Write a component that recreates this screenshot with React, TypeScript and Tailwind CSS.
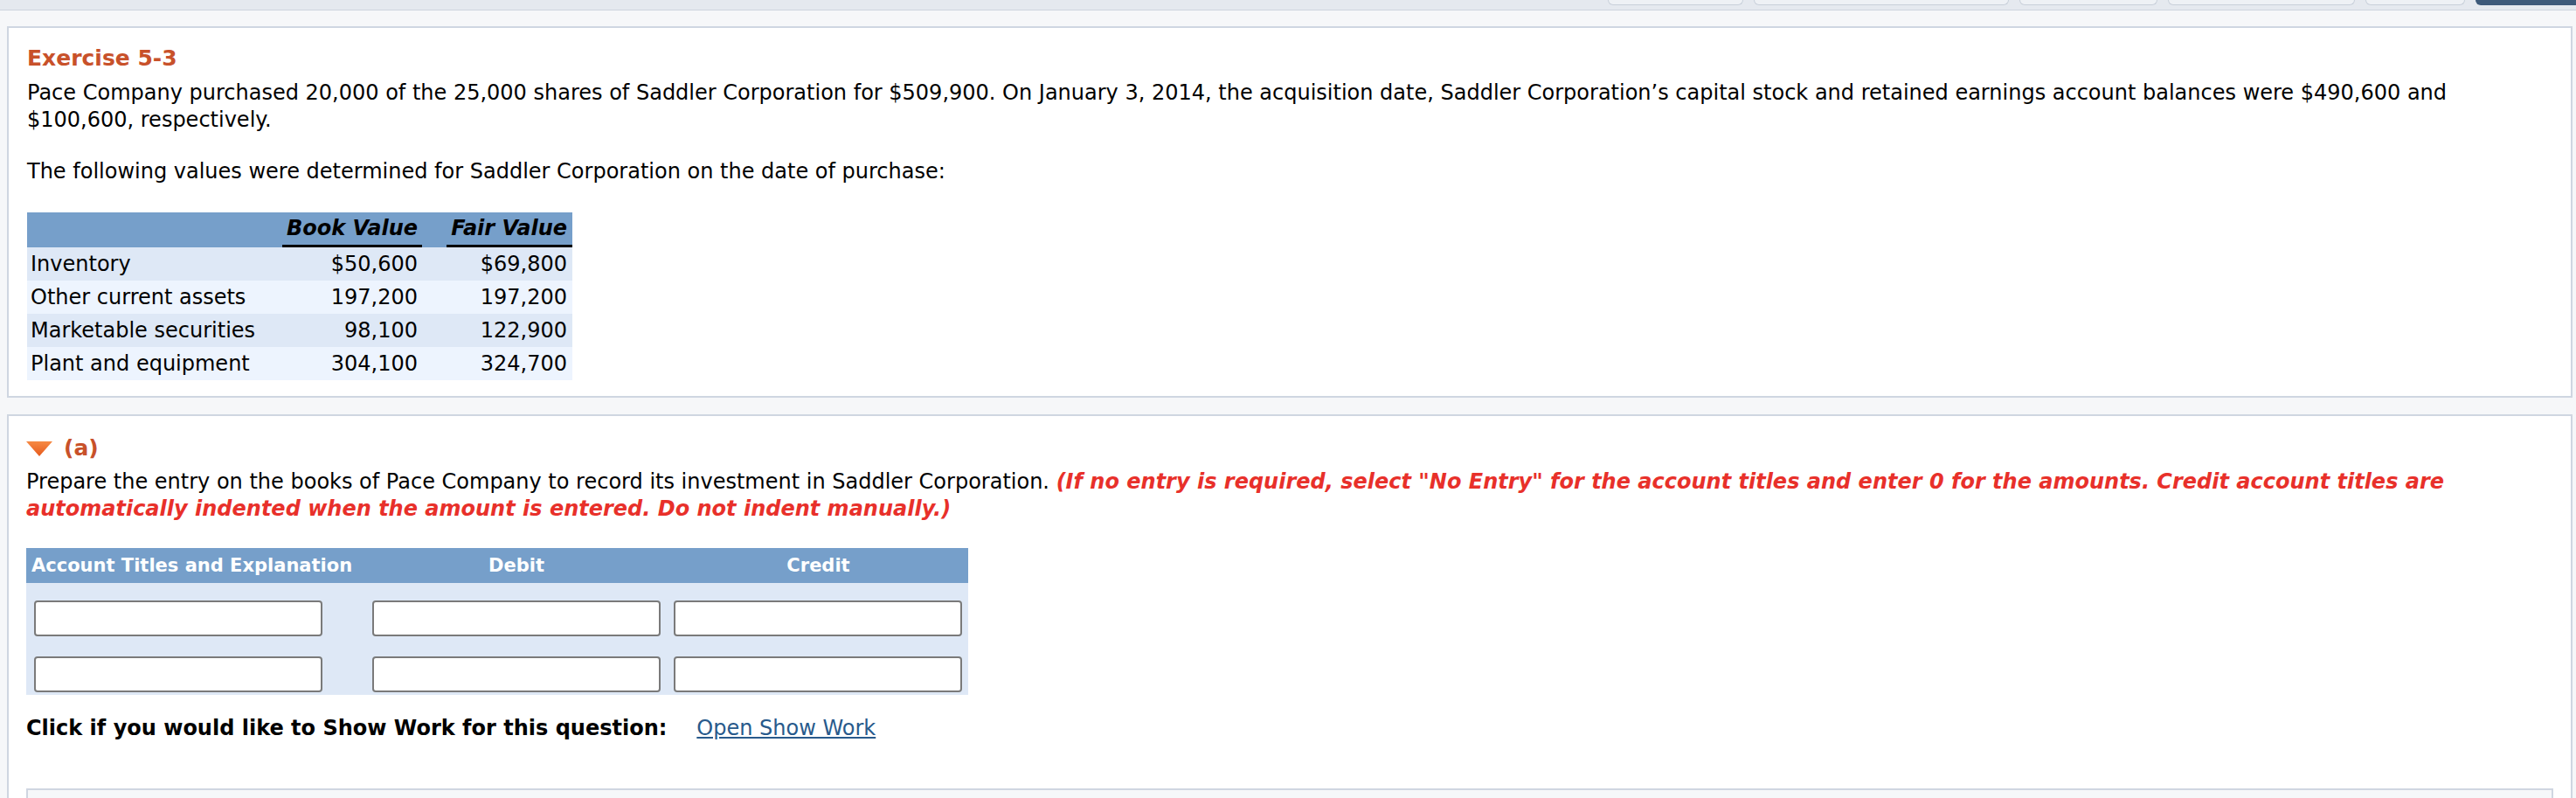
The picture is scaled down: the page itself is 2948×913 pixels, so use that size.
import React from 'react';

const font = { fontFamily: '"DejaVu Sans", Verdana, sans-serif' };

const assets = [
  { label: 'Inventory', book: '$50,600', fair: '$69,800' },
  { label: 'Other current assets', book: '197,200', fair: '197,200' },
  { label: 'Marketable securities', book: '98,100', fair: '122,900' },
  { label: 'Plant and equipment', book: '304,100', fair: '324,700' },
];

// top strip, only the lower edge of the toolbar buttons shows
const TopBar = () => (
  <div className="h-[12px] bg-[#e5e9ef] border-b border-[#cdd4de] flex justify-end items-start gap-[12px] overflow-hidden">
    <div className="w-[155px] h-[6px] bg-[#eef1f5] border border-t-0 border-[#c9d0da] rounded-b-[6px]" />
    <div className="w-[292px] h-[6px] bg-[#eef1f5] border border-t-0 border-[#c9d0da] rounded-b-[6px]" />
    <div className="w-[158px] h-[6px] bg-[#eef1f5] border border-t-0 border-[#c9d0da] rounded-b-[6px]" />
    <div className="w-[214px] h-[6px] bg-[#eef1f5] border border-t-0 border-[#c9d0da] rounded-b-[6px]" />
    <div className="w-[114px] h-[6px] bg-[#eef1f5] border border-t-0 border-[#c9d0da] rounded-b-[6px]" />
    <div className="w-[115px] h-[6px] bg-[#3e5a7a] rounded-bl-[6px]" />
  </div>
);

const ValuesTable = () => (
  <div className="w-[624px] text-[24px] text-black">
    <div className="flex h-[40px] bg-[#769fca]">
      <div className="w-[292px]" />
      <div className="w-[160px] h-[40px] border-b-[3px] border-black text-right pr-[5px] leading-[37px] font-bold italic whitespace-nowrap">Book Value</div>
      <div className="w-[28px]" />
      <div className="w-[144px] h-[40px] border-b-[3px] border-black text-right pr-[6px] leading-[37px] font-bold italic whitespace-nowrap">Fair Value</div>
    </div>
    {assets.map((row, i) => (
      <div key={row.label} className={`flex h-[38px] leading-[38px] ${i % 2 === 0 ? 'bg-[#dee8f6]' : 'bg-[#edf4fe]'}`}>
        <div className="w-[292px] pl-[4px] whitespace-nowrap">{row.label}</div>
        <div className="w-[160px] text-right pr-[5px]">{row.book}</div>
        <div className="w-[28px]" />
        <div className="w-[144px] text-right pr-[6px]">{row.fair}</div>
      </div>
    ))}
  </div>
);

const EntryInput = () => (
  <input
    type="text"
    className="ml-[9px] w-[330px] h-[41px] bg-white border-2 border-[#7a7a7a] rounded-[4px] outline-none"
  />
);

const JournalTable = () => (
  <div className="w-[1078px]">
    <div className="grid grid-cols-[387px_348px_343px] h-[40px] bg-[#769fca] text-white font-bold text-[21px] leading-[40px]">
      <div className="pl-[6px] whitespace-nowrap">Account Titles and Explanation</div>
      <div className="text-center">Debit</div>
      <div className="text-center">Credit</div>
    </div>
    <div className="bg-[#dee8f6] pt-[20px] pb-[3px] flex flex-col gap-[23px]">
      {[0, 1].map((r) => (
        <div key={r} className="grid grid-cols-[387px_348px_343px]">
          <div><EntryInput /></div>
          <div><EntryInput /></div>
          <div className="-ml-[3px]"><EntryInput /></div>
        </div>
      ))}
    </div>
  </div>
);

export default function App() {
  return (
    <div className="min-h-screen bg-[#f6f7f9] text-black" style={font}>
      <TopBar />
      <div className="pl-[8px] pr-[4px] pt-[18px] flex flex-col gap-[19px]">
        {/* problem statement */}
        <div className="bg-white border-2 border-[#cfd6e1] pl-[21px] pr-[20px] pt-[19px] pb-[18px]">
          <h2 className="text-[25px] leading-[32px] font-bold text-[#c8512a]">Exercise 5-3</h2>
          <p className="mt-[8px] text-[24px] leading-[31px]">
            Pace Company purchased 20,000 of the 25,000 shares of Saddler Corporation for $509,900. On January 3, 2014, the acquisition date, Saddler Corporation’s capital stock and retained earnings account balances were $490,600 and $100,600, respectively.
          </p>
          <p className="mt-[28px] text-[24px] leading-[31px]">
            The following values were determined for Saddler Corporation on the date of purchase:
          </p>
          <div className="mt-[31px]">
            <ValuesTable />
          </div>
        </div>

        {/* part (a) */}
        <div className="bg-white border-2 border-[#cfd6e1] pl-[20px] pr-[20px] pt-[21px]">
          <div className="flex items-center gap-[13px] h-[32px]">
            <svg width="30" height="17" viewBox="0 0 30 17">
              <defs>
                <linearGradient id="tri" x1="0" y1="0" x2="0" y2="1">
                  <stop offset="0" stopColor="#f68a44" />
                  <stop offset="1" stopColor="#e65a1d" />
                </linearGradient>
              </defs>
              <path d="M0 0 H30 L15 17 Z" fill="url(#tri)" />
            </svg>
            <span className="text-[25px] leading-[32px] font-bold text-[#c8512a]">(a)</span>
          </div>
          <p className="mt-[7px] text-[24px] leading-[31px]">
            Prepare the entry on the books of Pace Company to record its investment in Saddler Corporation.{' '}
            <span className="font-bold italic text-[#e8302a]">
              (If no entry is required, select "No Entry" for the account titles and enter 0 for the amounts. Credit account titles are automatically indented when the amount is entered. Do not indent manually.)
            </span>
          </p>
          <div className="mt-[29px]">
            <JournalTable />
          </div>
          <div className="mt-[23px] text-[24px] leading-[31px] flex">
            <span className="font-bold">Click if you would like to Show Work for this question:</span>
            <a href="#" className="ml-[34px] text-[#285a8c] underline">Open Show Work</a>
          </div>
          <div className="mt-[53px] h-[40px] bg-[#f6f7f9] border-2 border-[#cfd6e1]" />
        </div>
      </div>
    </div>
  );
}
